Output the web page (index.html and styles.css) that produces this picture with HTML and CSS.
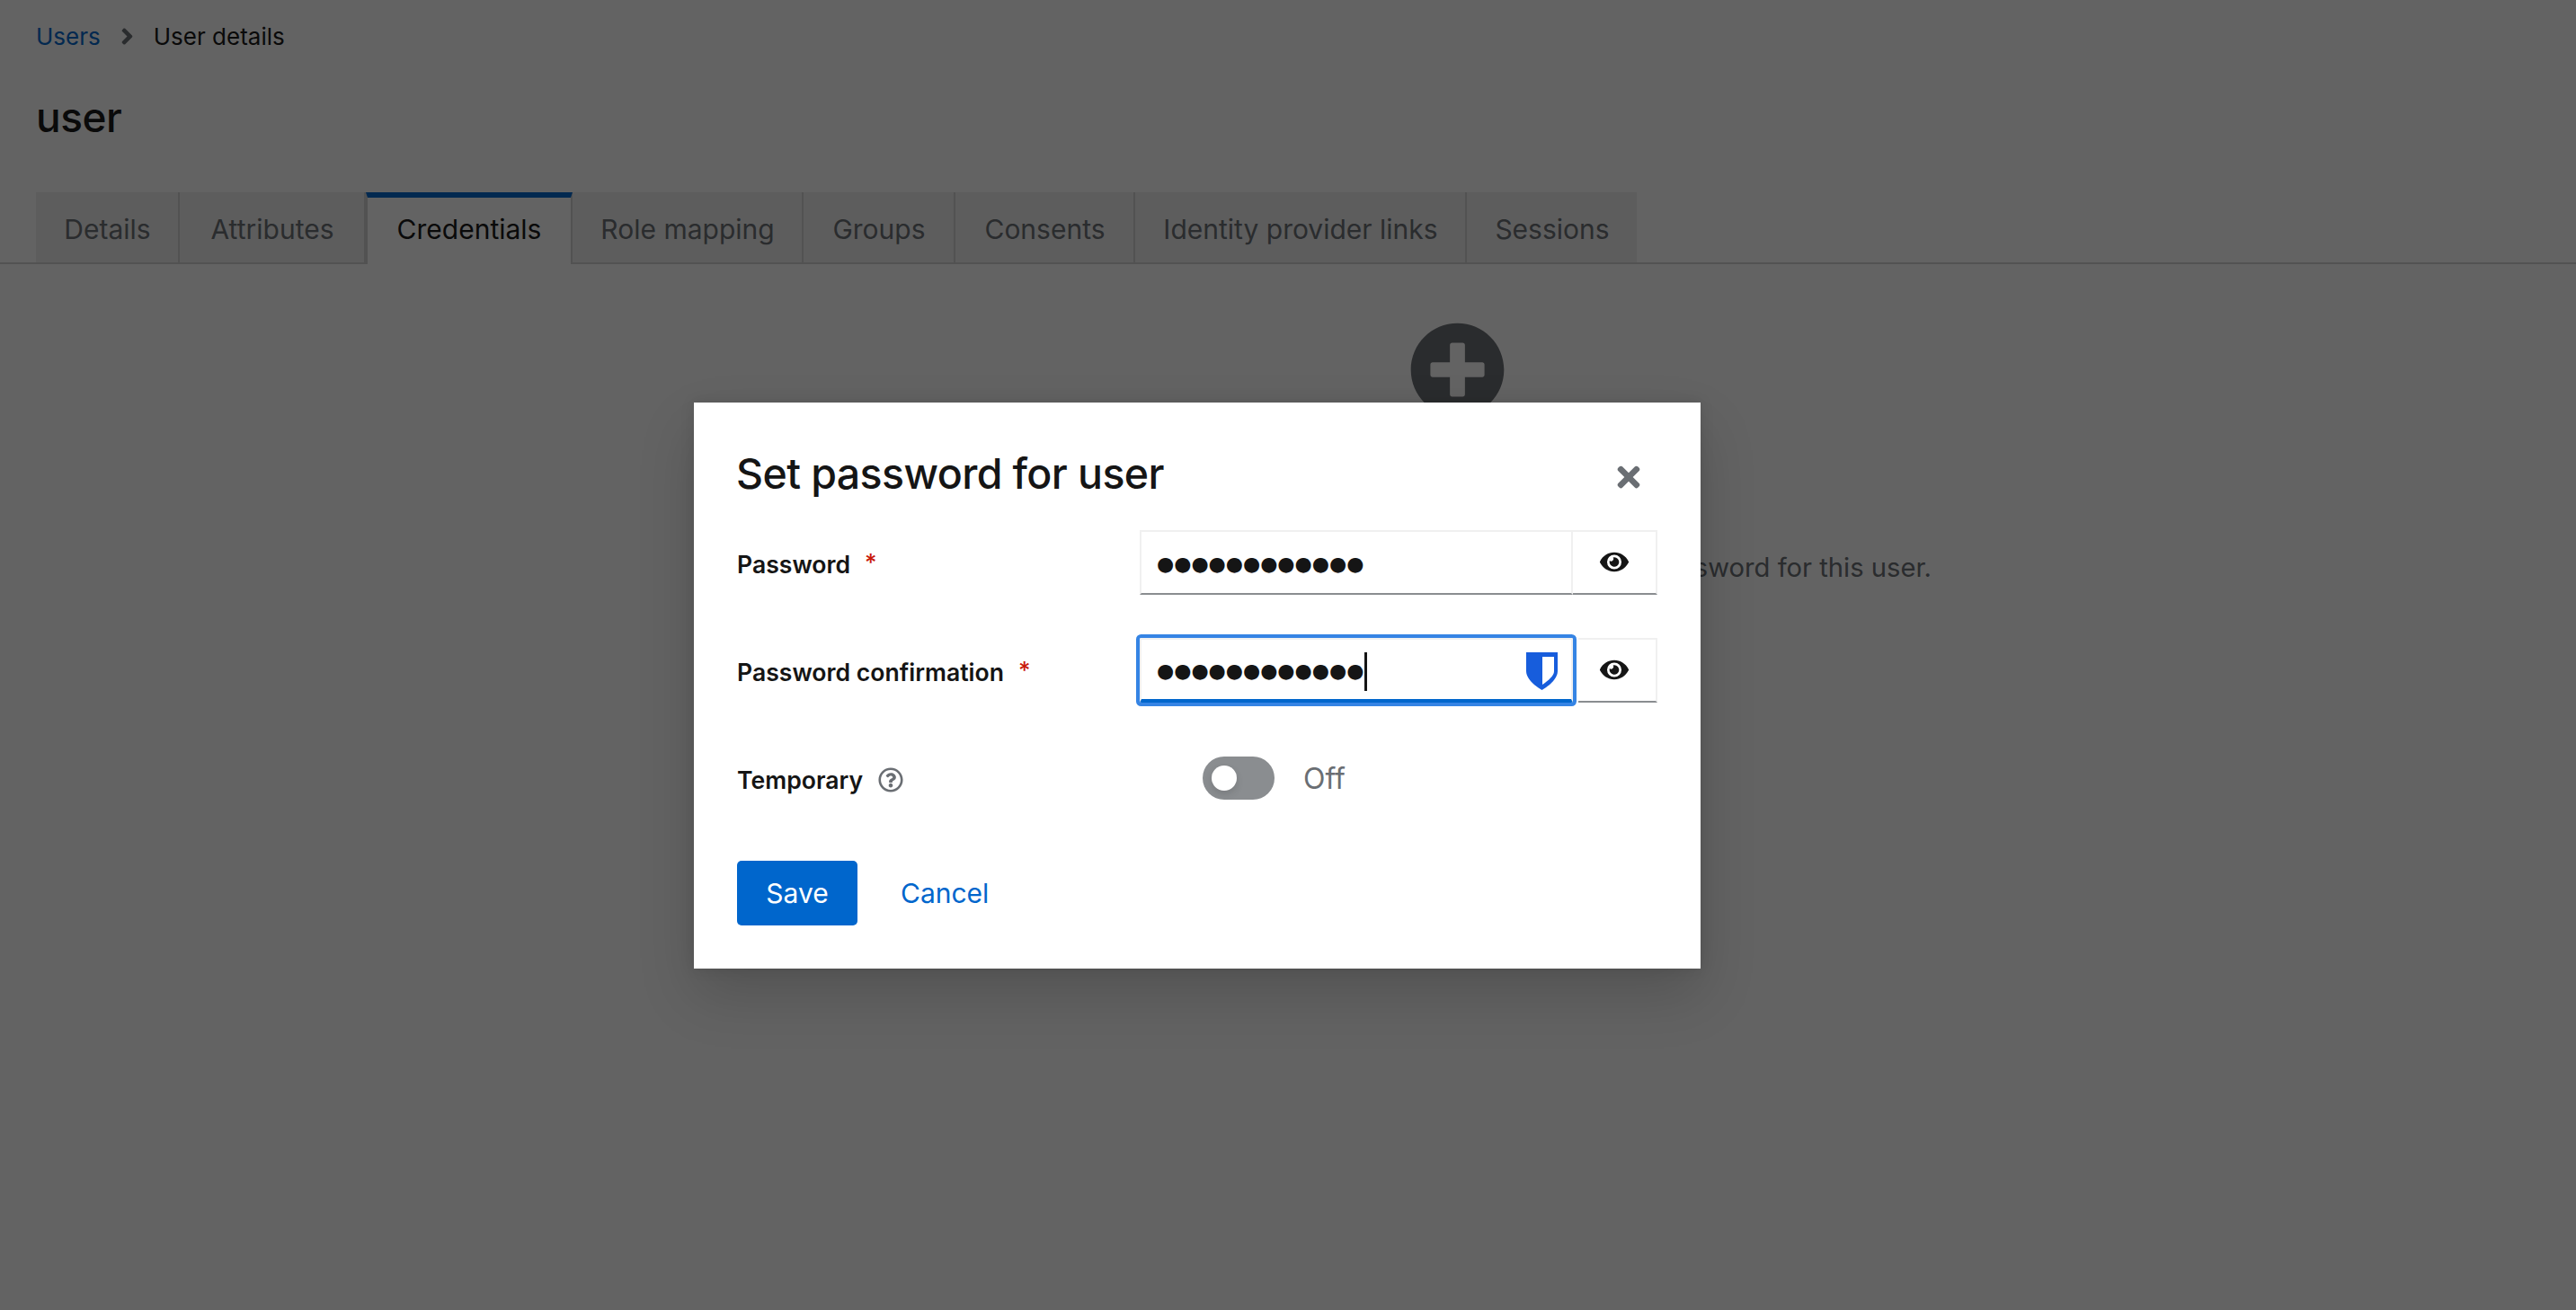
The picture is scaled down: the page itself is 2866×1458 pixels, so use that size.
FILE: index.html
```html
<!DOCTYPE html>
<html lang="en">
<head>
<meta charset="utf-8">
<title>Set password for user</title>
<link rel="stylesheet" href="styles.css">
</head>
<body>
<div class="page">
  <header class="page-header">
    <nav class="breadcrumb">
      <a class="crumb-link">Users</a>
      <svg class="crumb-sep" viewBox="0 0 256 512"><path d="M224.3 273l-136 136c-9.4 9.4-24.6 9.4-33.9 0l-22.6-22.6c-9.4-9.4-9.4-24.6 0-33.9l96.4-96.4-96.4-96.4c-9.4-9.4-9.4-24.6 0-33.9L54.3 103c9.4-9.4 24.6-9.4 33.9 0l136 136c9.5 9.4 9.5 24.6.1 34z"/></svg>
      <span class="crumb-current">User details</span>
    </nav>
    <h1 class="page-title">user</h1>
  </header>
  <div class="tabs">
    <span class="tab">Details</span>
    <span class="tab">Attributes</span>
    <span class="tab tab-active">Credentials</span>
    <span class="tab">Role mapping</span>
    <span class="tab">Groups</span>
    <span class="tab">Consents</span>
    <span class="tab">Identity provider links</span>
    <span class="tab">Sessions</span>
  </div>
  <main class="empty">
    <svg class="empty-icon" viewBox="0 0 512 512"><path d="M256 8C119 8 8 119 8 256s111 248 248 248 248-111 248-248S393 8 256 8zm144 276c0 6.6-5.4 12-12 12h-92v92c0 6.6-5.4 12-12 12h-56c-6.6 0-12-5.4-12-12v-92h-92c-6.6 0-12-5.4-12-12v-56c0-6.6 5.4-12 12-12h92v-92c0-6.6 5.4-12 12-12h56c6.6 0 12 5.4 12 12v92h92c6.6 0 12 5.4 12 12v56z"/></svg>
    <h2 class="empty-title">No credentials</h2>
    <p class="empty-text">This user doesn't have any credentials. You can set a password for this user.</p>
  </main>
</div>

<div class="backdrop">
  <section class="modal">
    <button class="modal-close" aria-label="Close">
      <svg viewBox="0 0 352 512"><path d="M242.72 256l100.07-100.07c12.28-12.28 12.28-32.19 0-44.48l-22.24-22.24c-12.28-12.28-32.19-12.28-44.48 0L176 189.28 75.93 89.21c-12.28-12.28-32.19-12.28-44.48 0L9.21 111.45c-12.28 12.28-12.28 32.19 0 44.48L109.28 256 9.21 356.07c-12.28 12.28-12.28 32.19 0 44.48l22.24 22.24c12.28 12.28 32.2 12.28 44.48 0L176 322.72l100.07 100.07c12.28 12.28 32.2 12.28 44.48 0l22.24-22.24c12.28-12.28 12.28-32.19 0-44.48L242.72 256z"/></svg>
    </button>
    <h2 class="modal-title">Set password for user</h2>
    <form class="form">
      <div class="label">Password<span class="req">*</span></div>
      <div class="input-group">
        <div class="input"><span class="dots">●●●●●●●●●●●●</span></div>
        <button type="button" class="eye" aria-label="Show password">
          <svg viewBox="0 0 576 512"><path d="M572.52 241.4C518.29 135.59 410.93 64 288 64S57.68 135.64 3.48 241.41a32.35 32.35 0 0 0 0 29.19C57.71 376.41 165.07 448 288 448s230.32-71.64 284.52-177.41a32.35 32.35 0 0 0 0-29.19zM288 400a144 144 0 1 1 144-144 143.93 143.93 0 0 1-144 144zm0-240a95.31 95.31 0 0 0-25.31 3.79 47.85 47.85 0 0 1-66.9 66.9A95.78 95.78 0 1 0 288 160z"/></svg>
        </button>
      </div>

      <div class="label">Password confirmation<span class="req">*</span></div>
      <div class="input-group">
        <div class="input input-focus">
          <span class="dots">●●●●●●●●●●●●</span><span class="caret"></span>
          <svg class="shield" viewBox="0 0 35 42"><path fill="#175ddc" d="M0 0H35V21C35 29 26 37 17.5 42C9 37 0 29 0 21Z"/><path fill="#fff" d="M18 5H31V21C31 26 25 31 18 36Z"/></svg>
        </div>
        <button type="button" class="eye" aria-label="Show password">
          <svg viewBox="0 0 576 512"><path d="M572.52 241.4C518.29 135.59 410.93 64 288 64S57.68 135.64 3.48 241.41a32.35 32.35 0 0 0 0 29.19C57.71 376.41 165.07 448 288 448s230.32-71.64 284.52-177.41a32.35 32.35 0 0 0 0-29.19zM288 400a144 144 0 1 1 144-144 143.93 143.93 0 0 1-144 144zm0-240a95.31 95.31 0 0 0-25.31 3.79 47.85 47.85 0 0 1-66.9 66.9A95.78 95.78 0 1 0 288 160z"/></svg>
        </button>
      </div>

      <div class="label">Temporary
        <svg class="help" viewBox="0 0 512 512"><path d="M256 8C119.043 8 8 119.083 8 256c0 136.997 111.043 248 248 248s248-111.003 248-248C504 119.083 392.957 8 256 8zm0 448c-110.532 0-200-89.431-200-200 0-110.495 89.472-200 200-200 110.491 0 200 89.471 200 200 0 110.53-89.431 200-200 200zm107.244-255.2c0 67.052-72.421 68.084-72.421 92.863V300c0 6.627-5.373 12-12 12h-45.647c-6.627 0-12-5.373-12-12v-8.659c0-35.745 27.1-50.034 47.579-61.516 17.561-9.845 28.324-16.541 28.324-29.579 0-17.246-21.999-28.693-39.784-28.693-23.189 0-33.894 10.977-48.942 29.969-4.057 5.12-11.46 6.071-16.666 2.124l-27.824-21.098c-5.107-3.872-6.251-11.066-2.644-16.363C184.846 131.491 214.94 112 261.794 112c49.071 0 101.45 38.304 101.45 88.8zM298 368c0 23.159-18.841 42-42 42s-42-18.841-42-42 18.841-42 42-42 42 18.841 42 42z"/></svg>
      </div>
      <div class="switch-row">
        <span class="switch"><span class="knob"></span></span>
        <span class="switch-label">Off</span>
      </div>
    </form>
    <div class="actions">
      <button class="btn-primary">Save</button>
      <button class="btn-link">Cancel</button>
    </div>
  </section>
</div>
</body>
</html>
```

FILE: styles.css
```css
* { box-sizing: border-box; }
html, body { margin: 0; height: 100%; }
body {
  position: relative;
  width: 2866px;
  height: 1458px;
  overflow: hidden;
  background: #fff;
  color: #151515;
  font-family: "Inter", "Liberation Sans", sans-serif;
  font-size: 26px;
}
.page { display: flex; flex-direction: column; height: 100%; }
.page-header { padding: 24px 40px 0; height: 214px; }
.breadcrumb { display: flex; align-items: center; height: 32px; }
.crumb-link { color: #06c; }
.crumb-sep { width: 15px; height: 29px; margin: 0 22px; fill: #6a6e73; }
.page-title { margin: 44px 0 0; font-size: 46px; font-weight: 500; line-height: 60px; letter-spacing: -0.5px; }
.tabs {
  display: grid;
  grid-template-columns: 160px 207px 230px 257px 169px 200px 369px 189px;
  height: 80px;
  padding-left: 40px;
  border-bottom: 2px solid #d2d2d2;
}
.tab {
  display: flex;
  align-items: center;
  justify-content: center;
  padding: 4px 0 0 1px;
  height: 78px;
  background: #f0f0f0;
  border-right: 2px solid #d2d2d2;
  color: #6a6e73;
  font-size: 30px;
  white-space: nowrap;
}
.tab:last-child { border-right: 0; }
.tab-active {
  height: 80px;
  background: #fff;
  color: #151515;
  border-top: 6px solid #06c;
  border-left: 2px solid #d2d2d2;
  border-right: 2px solid #d2d2d2;
  padding: 0 0 4px;
}
.empty {
  display: flex;
  flex-direction: column;
  align-items: center;
  margin-left: 376px;
  padding-top: 64px;
}
.empty-icon { width: 107px; height: 107px; fill: #6a6e73; }
.empty-title { margin: 44px 0 0; font-size: 36px; font-weight: 400; line-height: 48px; }
.empty-text { margin: 55px 0 0; font-size: 29.2px; line-height: 40px; color: #6a6e73; white-space: nowrap; }

.backdrop {
  position: absolute;
  inset: 0;
  background: rgba(3, 3, 3, 0.62);
  padding: 448px 0 0 772px;
}
.modal {
  position: relative;
  width: 1120px;
  height: 630px;
  padding: 48px 48px 48px 47px;
  background: #fff;
  box-shadow: 0 29px 59px rgba(3, 3, 3, 0.16), 0 0 15px rgba(3, 3, 3, 0.1);
}
.modal-close {
  position: absolute;
  top: 71px;
  right: 69px;
  width: 23px;
  height: 23px;
  padding: 0;
  border: 0;
  background: none;
  display: flex;
  justify-content: center;
  align-items: center;
}
.modal-close svg { width: 28px; height: 36px; flex: none; fill: #6a6e73; }
.modal-title { margin: 0 0 32px; font-size: 46.5px; font-weight: 500; line-height: 62px; color: #151515; letter-spacing: -0.6px; }
.form {
  display: grid;
  grid-template-columns: 449px 576px;
  grid-auto-rows: 72px;
  row-gap: 48px;
}
.label {
  display: flex;
  align-items: center;
  padding: 4px 0 0 1px;
  font-size: 26.6px;
  font-weight: 600;
  color: #151515;
}
.req { margin-left: 16px; margin-bottom: 6px; color: #c9190b; font-size: 26px; font-weight: 500; }
.help { width: 28px; height: 28px; margin-left: 17px; fill: #6a6e73; }
.input-group { display: flex; }
.input {
  position: relative;
  flex: 1;
  display: flex;
  align-items: center;
  padding: 4px 0 0 17px;
  border: 2px solid #f0f0f0;
  border-bottom-color: #8a8d90;
}
.dots { font-family: "DejaVu Sans", sans-serif; font-size: 22px; line-height: 1; color: #151515; }
.input-focus {
  border-bottom: 4px solid #06c;
  box-shadow: 0 0 0 4px #3584e4, 0 0 0 6px #fff;
  border-radius: 2px;
  z-index: 1;
}
.caret { width: 3px; height: 43px; margin-left: 1px; background: #151515; }
.shield { position: absolute; top: 14px; right: 15px; width: 35px; height: 42px; }
.eye {
  flex: none;
  width: 94px;
  padding: 0 0 2px;
  display: flex;
  align-items: center;
  justify-content: center;
  background: #fff;
  border: 2px solid #f0f0f0;
  border-left-width: 0;
  border-bottom-color: #8a8d90;
}
.eye svg { width: 32px; height: 29px; fill: #151515; }
.switch-row { display: flex; align-items: center; padding-left: 70px; gap: 32px; }
.switch {
  display: flex;
  align-items: center;
  width: 80px;
  height: 48px;
  padding-left: 10px;
  border-radius: 24px;
  background: #8a8d90;
}
.knob { width: 28px; height: 28px; border-radius: 50%; background: #fff; box-shadow: 0 4px 8px rgba(3,3,3,.12); }
.switch-label { font-size: 32px; color: #6a6e73; }
.actions { display: flex; align-items: center; gap: 48px; margin-top: 56px; margin-left: 1px; }
.btn-primary {
  width: 134px;
  height: 72px;
  padding: 0;
  border: 0;
  border-radius: 5px;
  background: #06c;
  color: #fff;
  font: inherit;
  font-size: 30px;
}
.btn-link { padding: 0; border: 0; background: none; color: #06c; font: inherit; font-size: 30px; }
```
